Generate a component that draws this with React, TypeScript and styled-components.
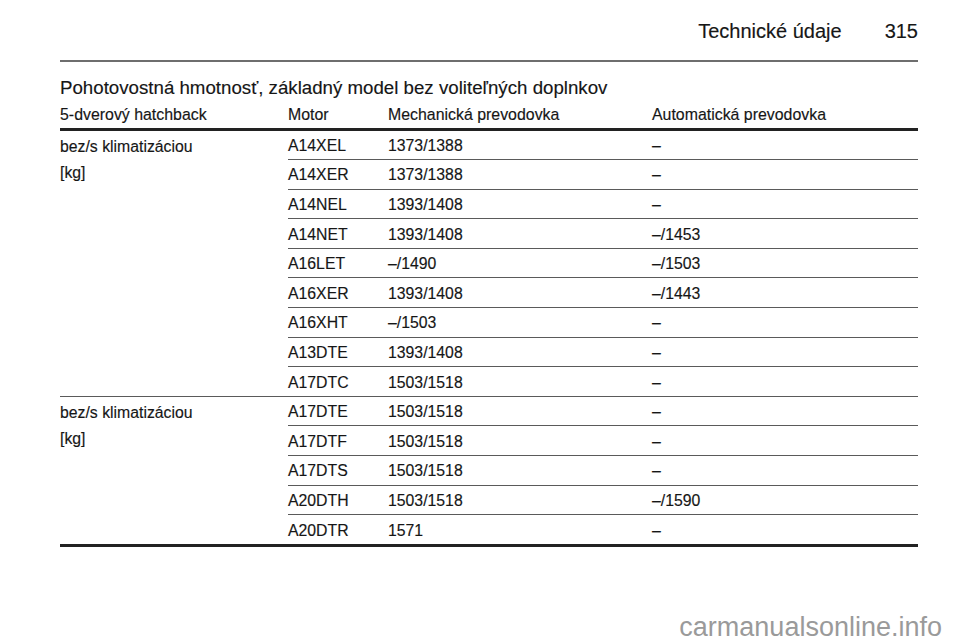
import styled, { createGlobalStyle } from "styled-components";

const GlobalStyle = createGlobalStyle`
  html, body {
    margin: 0;
    padding: 0;
    background: #ffffff;
  }
  body {
    font-family: "Liberation Sans", Arial, sans-serif;
    color: #161616;
    -webkit-text-stroke: 0.15px #161616;
  }
`;

type Row = { motor: string; manual: string; auto: string };

const groups: { label: string; unit: string; rows: Row[] }[] = [
  {
    label: "bez/s klimatizáciou",
    unit: "[kg]",
    rows: [
      { motor: "A14XEL", manual: "1373/1388", auto: "–" },
      { motor: "A14XER", manual: "1373/1388", auto: "–" },
      { motor: "A14NEL", manual: "1393/1408", auto: "–" },
      { motor: "A14NET", manual: "1393/1408", auto: "–/1453" },
      { motor: "A16LET", manual: "–/1490", auto: "–/1503" },
      { motor: "A16XER", manual: "1393/1408", auto: "–/1443" },
      { motor: "A16XHT", manual: "–/1503", auto: "–" },
      { motor: "A13DTE", manual: "1393/1408", auto: "–" },
      { motor: "A17DTC", manual: "1503/1518", auto: "–" },
    ],
  },
  {
    label: "bez/s klimatizáciou",
    unit: "[kg]",
    rows: [
      { motor: "A17DTE", manual: "1503/1518", auto: "–" },
      { motor: "A17DTF", manual: "1503/1518", auto: "–" },
      { motor: "A17DTS", manual: "1503/1518", auto: "–" },
      { motor: "A20DTH", manual: "1503/1518", auto: "–/1590" },
      { motor: "A20DTR", manual: "1571", auto: "–" },
    ],
  },
];

function App() {
  return (
    <>
      <GlobalStyle />
      <Page>
        <PageHeader>
          <span>Technické údaje</span>
          <span>315</span>
        </PageHeader>
        <Rule />
        <Title>Pohotovostná hmotnosť, základný model bez voliteľných doplnkov</Title>
        <Table>
          <colgroup>
            <col style={{ width: 228 }} />
            <col style={{ width: 100 }} />
            <col style={{ width: 264 }} />
            <col />
          </colgroup>
          <thead>
            <tr>
              <Th>5-dverový hatchback</Th>
              <Th>Motor</Th>
              <Th>Mechanická prevodovka</Th>
              <Th>Automatická prevodovka</Th>
            </tr>
          </thead>
          <tbody>
            {groups.map((g, gi) => {
              const lastGroup = gi === groups.length - 1;
              return g.rows.map((r, ri) => {
                const last = lastGroup && ri === g.rows.length - 1;
                return (
                  <tr key={`${gi}-${ri}`}>
                    {ri === 0 && (
                      <LabelCell rowSpan={g.rows.length} $last={lastGroup}>
                        <Label>{g.label}</Label>
                        <Unit>{g.unit}</Unit>
                      </LabelCell>
                    )}
                    <Td $last={last}>{r.motor}</Td>
                    <Td $last={last}>{r.manual}</Td>
                    <Td $last={last}>{r.auto}</Td>
                  </tr>
                );
              });
            })}
          </tbody>
        </Table>
        <Watermark>carmanualsonline.info</Watermark>
      </Page>
    </>
  );
}

const Page = styled.div`
  position: relative;
  width: 960px;
  height: 642px;
  box-sizing: border-box;
  padding: 0 42px 0 60px;
  overflow: hidden;
`;

const PageHeader = styled.div`
  display: flex;
  justify-content: flex-end;
  align-items: baseline;
  gap: 43px;
  padding-top: 19px;
  height: 40px;
  box-sizing: border-box;
  font-size: 20px;
  line-height: 25px;
`;

const Rule = styled.div`
  height: 2px;
  background: #6e6e6e;
  margin-top: 20px;
`;

const Title = styled.h1`
  margin: 14px 0 0;
  font-size: 18.7px;
  font-weight: normal;
  line-height: 23px;
`;

const Table = styled.table`
  width: 100%;
  border-collapse: collapse;
  table-layout: fixed;
  margin-top: 2px;
  font-size: 15.8px;
`;

const Th = styled.th`
  text-align: left;
  font-weight: normal;
  font-size: 15.9px;
  padding: 0 0 4px;
  height: 28px;
  box-sizing: border-box;
  vertical-align: bottom;
  line-height: 19px;
  border-bottom: 3px solid #222;
`;

const Td = styled.td<{ $last?: boolean }>`
  padding: 1px 0 0;
  height: 27.6px;
  line-height: 19px;
  vertical-align: middle;
  border-bottom: ${(p) => (p.$last ? "3px solid #222" : "1px solid #5a5a5a")};
`;

const LabelCell = styled.td<{ $last?: boolean }>`
  padding: 6px 0 0;
  vertical-align: top;
  border-bottom: ${(p) => (p.$last ? "3px solid #222" : "1px solid #5a5a5a")};
`;

const Label = styled.div`
  line-height: 19px;
`;

const Unit = styled.div`
  line-height: 19px;
  margin-top: 7px;
`;

const Watermark = styled.div`
  position: absolute;
  right: 18px;
  bottom: 0;
  font-size: 27px;
  line-height: 30px;
  color: #9a9a9a;
  -webkit-text-stroke: 0;
`;

export default App;
